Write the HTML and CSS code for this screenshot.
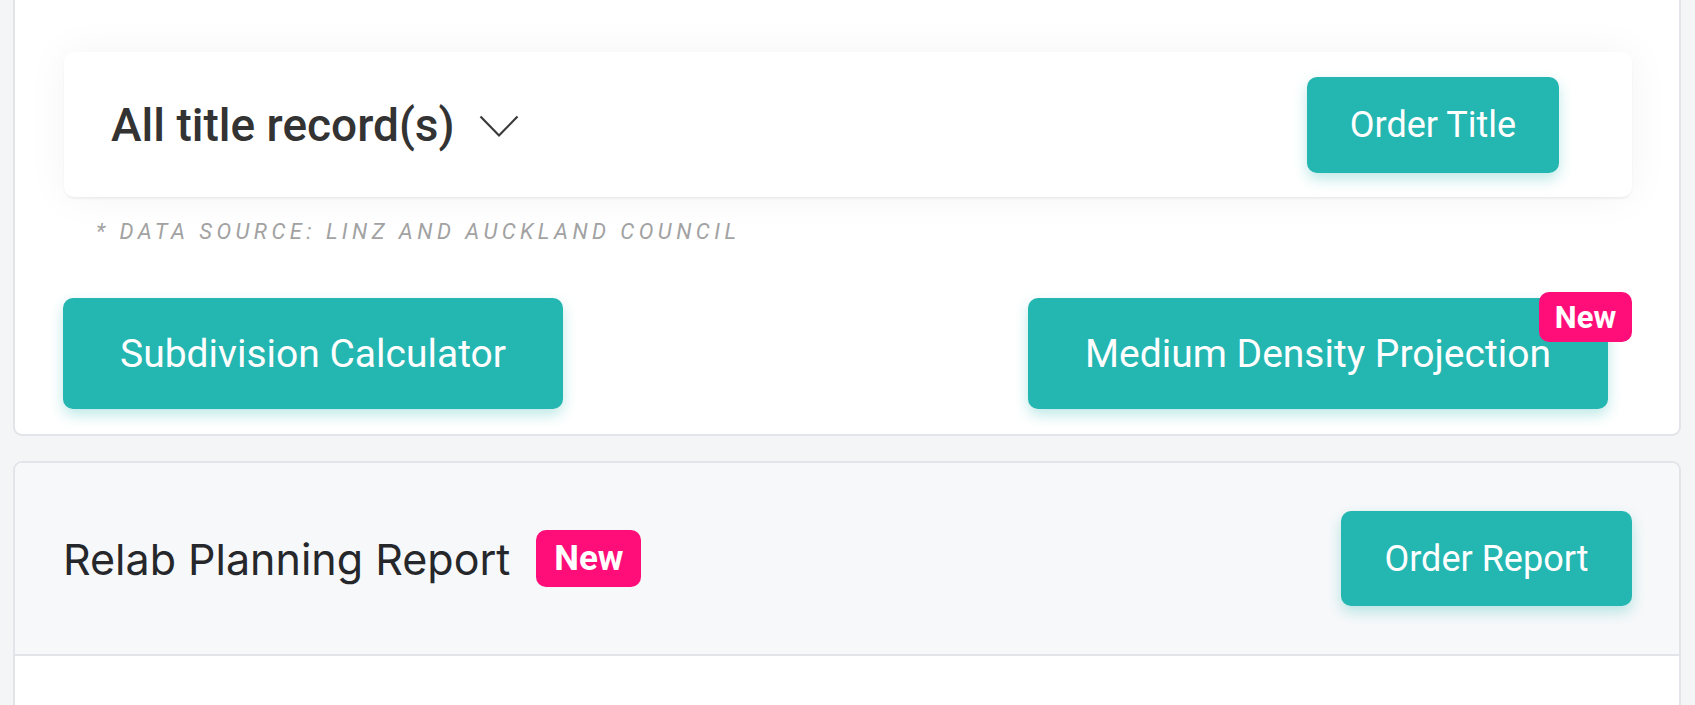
FILE: index.html
```html
<!DOCTYPE html>
<html lang="en">
<head>
  <meta charset="UTF-8" />
  <title>Property - Titles and Reports</title>
  <meta name="viewport" content="width=device-width, initial-scale=1" />
  <link rel="stylesheet" href="styles.css">
</head>
<body>
  <div class="page">
    <div class="card card-titles">
      <div class="title-box">
        <div class="title-select">
          <span class="title-label">All title record(s)</span>
          <svg class="chevron" width="40" height="23" viewBox="0 0 40 23">
            <polyline points="1.5,1.5 20,20.5 38.5,1.5" fill="none" stroke="#3a3a3a" stroke-width="2.2" />
          </svg>
        </div>
        <button class="btn btn-order-title">Order Title</button>
      </div>
      <p class="source">* Data source: LINZ and Auckland Council</p>
      <div class="tools">
        <button class="btn btn-tool">Subdivision Calculator</button>
        <div class="tool-wrap">
          <button class="btn btn-tool">Medium Density Projection</button>
          <span class="badge badge-corner">New</span>
        </div>
      </div>
    </div>

    <div class="card card-report">
      <div class="report-head">
        <div class="report-title">
          <span>Relab Planning Report</span>
          <span class="badge badge-inline">New</span>
        </div>
        <button class="btn btn-order-report">Order Report</button>
      </div>
      <div class="report-body"></div>
    </div>
  </div>
</body>
</html>
```

FILE: styles.css
```css
body { margin: 0; background: #f4f5f6; font-family: Roboto, "Liberation Sans", sans-serif; overflow: hidden; }
.page { padding: 0 14px 0 13px; margin-top: -30px; }

.card { background: #fff; border: 2px solid #e2e4e9; border-radius: 9px; }
.card-titles { padding: 80px 47px 25px 49px; }

.title-box { display: flex; align-items: center; justify-content: space-between; height: 145px; padding: 0 73px 0 47px; background: #fff; border-radius: 10px; box-shadow: 0 2px 2px rgba(0,0,0,0.05), 0 0 40px rgba(0,0,0,0.05); }
.title-select { display: flex; align-items: center; gap: 24px; }
.title-label { font-size: 46px; font-weight: 500; color: #333; }
.chevron { display: block; margin-top: 4px; }

.btn { border: 0; background: #24b6b1; color: #fff; font-family: Roboto, "Liberation Sans", sans-serif; border-radius: 10px; box-shadow: 0 6px 14px rgba(36,182,177,0.3); cursor: pointer; }
.btn-order-title { width: 252px; height: 96px; font-size: 36px; }

.source { margin: 21px 0 0 32px; font-size: 22px; line-height: 28px; font-style: italic; text-transform: uppercase; letter-spacing: 4.45px; color: #a2a2a2; }

.tools { display: flex; justify-content: space-between; align-items: flex-end; margin-top: 46px; }
.btn-tool { height: 111px; padding: 0 57px; font-size: 39px; margin-left: -1px; }
.tool-wrap { position: relative; padding: 6px 24px 0 0; }

.badge { display: inline-flex; align-items: center; justify-content: center; background: #ff0e7a; color: #fff; font-weight: 700; border-radius: 10px; }
.badge-corner { position: absolute; top: 0; right: 0; width: 93px; height: 50px; font-size: 31px; }

.card-report { margin-top: 25px; border-bottom: 0; border-radius: 9px 9px 0 0; overflow: hidden; }
.report-head { display: flex; align-items: center; justify-content: space-between; height: 191px; padding: 0 47px 0 48px; background: #f7f8fa; border-bottom: 2px solid #e2e4e9; }
.report-title { display: flex; align-items: center; gap: 26px; font-family: Inter, "Liberation Sans", sans-serif; font-size: 43px; color: #25272b; }
.badge-inline { width: 105px; height: 57px; font-family: Roboto, "Liberation Sans", sans-serif; font-size: 35px; }
.btn-order-report { width: 291px; height: 95px; font-size: 36px; }
.report-body { height: 200px; }
```
